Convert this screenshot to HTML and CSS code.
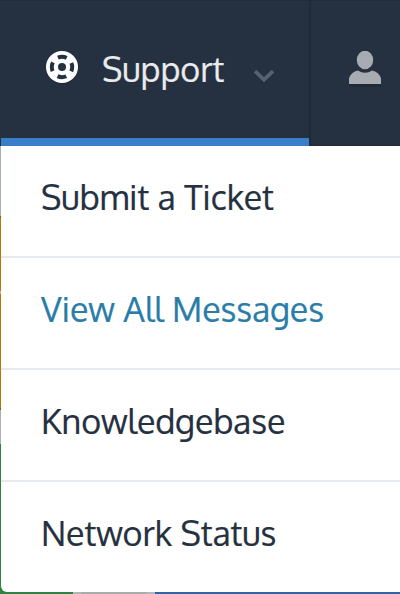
FILE: index.html
```
<!DOCTYPE html>
<html lang="en">
<head>
<meta charset="utf-8">
<title>Support</title>
<link rel="stylesheet" href="styles.css">
</head>
<body>
<header class="nav">
  <a class="tab tab-active">
    <svg class="icon-support" viewBox="0 0 34 36" width="34" height="36">
      <circle cx="17" cy="18.500" r="14" fill="none" stroke="#1f2937" stroke-width="4"/>
      <circle cx="17" cy="17" r="16" fill="#fff"/>
      <circle cx="17" cy="17" r="10.200" fill="none" stroke="#253040" stroke-width="4" stroke-dasharray="9 7.022" stroke-dashoffset="4.500"/>
      <circle cx="17" cy="17" r="4" fill="#253040"/>
    </svg>
    <span class="tab-label">Support</span>
    <svg class="icon-chevron" viewBox="0 0 22 14" width="22" height="14"><path d="M2 2.200 11 10.700 20 2.200" fill="none" stroke="#566170" stroke-width="3.800"/></svg>
  </a>
  <a class="tab tab-user">
    <svg viewBox="0 0 32 36" width="32" height="36">
      <path d="M0 33h32v3H0z" fill="#1f2937"/>
      <ellipse cx="16" cy="9" rx="8.200" ry="9.300" fill="#a7acb3"/>
      <path d="M0 33V27.500Q2 21 9 19.500Q12 21.800 16 21.800T23 19.500Q30 21 32 27.500V33z" fill="#a7acb3"/>
    </svg>
  </a>
</header>
<main class="page">
  <nav class="menu">
    <a class="item"><span>Submit a Ticket</span></a>
    <a class="item messages"><span>View All Messages</span></a>
    <a class="item"><span>Knowledgebase</span></a>
    <a class="item"><span>Network Status</span></a>
  </nav>
</main>
</body>
</html>
```
FILE: styles.css
```
* { box-sizing: border-box; }
body {
  margin: 0;
  width: 400px;
  height: 594px;
  overflow: hidden;
  font: 34px/48px "Oxygen", "Noto Sans", sans-serif;
  letter-spacing: -0.06px;
  -webkit-text-stroke: 0.2px currentColor;
  color: #253040;
}
.nav {
  display: flex;
  height: 146px;
  padding-left: 1px;
  background: #253040;
  border-top: 1px solid #202a38;
}
.tab { display: flex; align-items: flex-start; }
.tab-active {
  width: 308px;
  padding: 49px 0 0 44px;
  border-bottom: 8px solid #3a7dc8;
}
.icon-support { flex: none; }
.tab-label {
  width: 128px;
  margin: -5px 0 0 23px;
  color: #e9ebed;
  white-space: nowrap;
}
.icon-chevron { margin: 19px 0 0 23px; }
.tab-user {
  flex: 1;
  padding: 50px 0 0 38px;
  border-left: 2px solid #1f2937;
  border-bottom: 1px solid #1f2937;
}
.page {
  height: 448px;
  padding: 0 0 2px 1px;
  background:
    linear-gradient(90deg, #2c853f 73px, #b1b8b8 73px 81px, #a5adad 81px 147px, #b1b8b8 147px 155px, #2d66a8 155px) 0 446px / 400px 2px no-repeat,
    linear-gradient(#a6b0b5 70px, #8f5d00 70px 72px, #b87800 72px 145px, #b9b9b9 145px 148px, #b87800 148px 262px, #8f5d00 262px 264px, #a9b1b7 264px 298px, #2c853f 298px);
}
.menu {
  display: grid;
  grid-template-rows: 112px 112px 112px 110px;
  height: 446px;
  background: #fff;
  border-bottom-left-radius: 6px;
}
.item {
  padding: 27px 0 0 40px;
  border-bottom: 2px solid #e6eaee;
  white-space: nowrap;
}
.item:last-child { border-bottom: 0; }
.messages { color: #297da8; }
```
